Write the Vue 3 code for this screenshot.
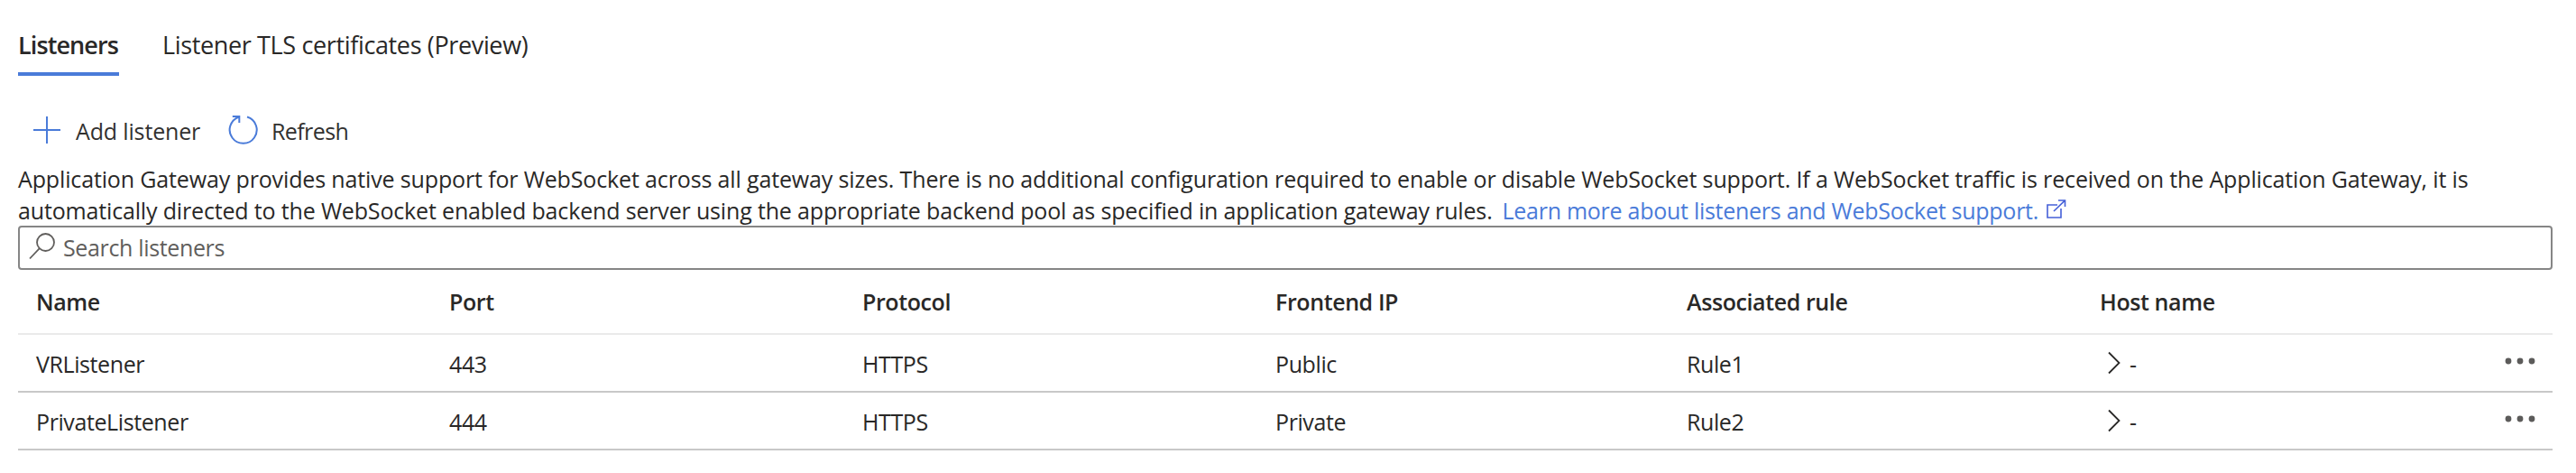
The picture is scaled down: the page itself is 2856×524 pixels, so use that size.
<script setup>
const columns = ['Name', 'Port', 'Protocol', 'Frontend IP', 'Associated rule', 'Host name']
const rows = [
  { name: 'VRListener', port: '443', protocol: 'HTTPS', ip: 'Public', rule: 'Rule1', host: '-' },
  { name: 'PrivateListener', port: '444', protocol: 'HTTPS', ip: 'Private', rule: 'Rule2', host: '-' },
]
</script>

<template>
  <main class="page">
    <nav class="tabs">
      <a class="tab active">Listeners</a>
      <a class="tab preview">Listener TLS certificates (Preview)</a>
    </nav>

    <div class="toolbar">
      <button class="cmd add">
        <svg width="32" height="32" viewBox="0 0 32 32"><path d="M16 1v30M1 16h30" /></svg>
        <span>Add listener</span>
      </button>
      <button class="cmd refresh">
        <svg width="34" height="34" viewBox="0 0 34 34">
          <path d="M21 2.5A15 15 0 1 1 12 2.6M4.8 2h7.5v7" />
        </svg>
        <span>Refresh</span>
      </button>
    </div>

    <p class="intro">
      <span class="line first">Application Gateway provides native support for WebSocket across all gateway sizes. There is no additional configuration required to enable or disable WebSocket support. If a WebSocket traffic is received on the Application Gateway, it is</span>
      <span class="line"><span class="second">automatically directed to the WebSocket enabled backend server using the appropriate backend pool as specified in application gateway rules.</span><a class="link">Learn more about listeners and WebSocket support.</a><svg class="ext" width="22" height="22" viewBox="0 0 22 22"><path d="M12 6H1v14h15V10M8 13L20.5 1M13 1h7.5v7" /></svg></span>
    </p>

    <div class="search">
      <svg width="30" height="30" viewBox="0 0 30 30"><circle cx="18.5" cy="10.5" r="9.5" /><path d="M11.8 17.2L1 28.5" /></svg>
      <span>Search listeners</span>
    </div>

    <section class="grid">
      <div class="row head">
        <span v-for="c in columns" :key="c">{{ c }}</span>
      </div>
      <div v-for="r in rows" :key="r.name" class="row">
        <span>{{ r.name }}</span>
        <span>{{ r.port }}</span>
        <span>{{ r.protocol }}</span>
        <span>{{ r.ip }}</span>
        <span>{{ r.rule }}</span>
        <span class="host">
          <svg class="chev" width="14" height="26" viewBox="0 0 14 26"><path d="M1 1.5l11.5 11.5L1 24.5" /></svg>
          <span>{{ r.host }}</span>
        </span>
        <svg class="dots" width="36" height="8" viewBox="0 0 36 8"><circle cx="5" cy="4" r="3.4" /><circle cx="18" cy="4" r="3.4" /><circle cx="31" cy="4" r="3.4" /></svg>
      </div>
    </section>
  </main>
</template>

<style>
body { background: #fff; }
</style>

<style scoped>
.page {
  box-sizing: border-box;
  width: 2856px;
  height: 524px;
  padding: 32px 26px 0 20px;
  overflow: hidden;
  font-family: "Open Sans", "Noto Sans", sans-serif;
  font-size: 25px;
  line-height: 35px;
  color: #292827;
  white-space: nowrap;
}
svg { display: block; flex: none; fill: none; stroke: currentColor; stroke-width: 2; }
.tabs { display: flex; gap: 48px; height: 52px; font-size: 27px; line-height: 36px; }
.tab { box-sizing: border-box; height: 52px; }
.active { width: 112px; font-weight: 600; letter-spacing: -0.9px; border-bottom: 4px solid #4a7bd9; }
.preview { letter-spacing: -0.36px; }
.toolbar { display: flex; height: 62px; margin-top: 35px; padding-left: 16px; }
.cmd {
  display: flex; align-items: center; height: 50px; padding: 0; border: 0; background: none;
  font: inherit; color: #323130;
}
.cmd svg { color: #4a7bd9; }
.cmd span { padding-top: 3px; letter-spacing: -0.6px; }
.add { width: 217px; gap: 16px; }
.add span { letter-spacing: -0.15px; }
.refresh { gap: 14px; }
.intro { margin: 0; height: 69px; }
.line { display: flex; height: 35px; }
.first { letter-spacing: -0.14px; }
.second { letter-spacing: -0.16px; }
.link { margin-left: 11px; color: #4a7bd9; letter-spacing: -0.27px; }
.ext { margin: 5px 0 0 9px; color: #4560d8; stroke-width: 1.6; }
.search {
  box-sizing: border-box; display: flex; gap: 8px; height: 49px; padding: 6px 10px;
  border: 2px solid #868686; border-radius: 4px; color: #605e5c; background: #fff;
}
.search svg { stroke-width: 1.8; }
.search span { margin-top: -1px; letter-spacing: -0.35px; }
.row {
  box-sizing: border-box; display: grid; height: 64px; padding: 15px 0 0 20px;
  grid-template-columns: 458px 458px 458px 456px 458px 448px auto;
  border-bottom: 2px solid #c8c8c8; letter-spacing: -0.4px;
}
.head { height: 72px; padding-top: 18px; font-weight: 600; border-color: #eaeaea; }
.host { display: flex; gap: 10px; padding-left: 9px; }
.chev { margin-top: 3px; stroke-width: 1.8; }
.dots { margin-top: 10px; fill: #5c5b5a; stroke: none; }
</style>
